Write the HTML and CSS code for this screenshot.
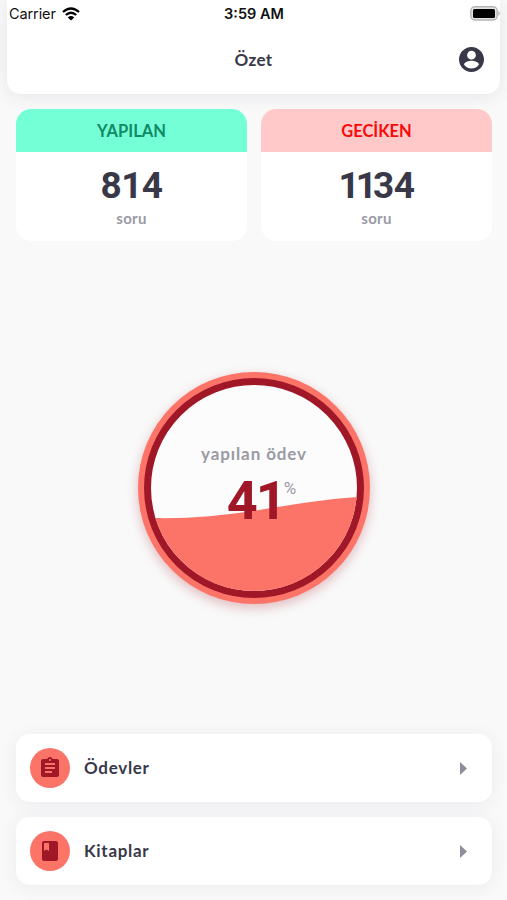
FILE: index.html
```html
<!DOCTYPE html>
<html lang="tr">
<head>
    <meta charset="UTF-8">
    <meta name="viewport" content="width=device-width, initial-scale=1.0">
    <title>Özet</title>
    <link rel="stylesheet" href="styles.css">
</head>
<body>
    <header class="header">
        <div class="status-bar">
            <div class="carrier">
                <span>Carrier</span>
                <svg class="wifi" viewBox="0 0 18 14">
                    <path d="M1 5Q9-2 17 5M3.8 8Q9 3.4 14.2 8" fill="none" stroke="#000" stroke-width="2.3"/>
                    <path d="M5.8 10.4Q9 7.7 12.2 10.4L9 13.6z"/>
                </svg>
            </div>
            <span class="time">3:59 AM</span>
            <svg class="battery" viewBox="0 0 30 15">
                <rect x="0.8" y="0.8" width="26.4" height="13.2" rx="4" fill="#e4e4e4" stroke="#b5b5b5" stroke-width="1.4"/>
                <rect x="3" y="3" width="22" height="9" rx="1.5"/>
                <path d="M28.3 4.8q3 2.600 0 5.200z" fill="#b5b5b5"/>
            </svg>
        </div>
        <div class="title-bar">
            <h1>Özet</h1>
            <svg class="account" viewBox="2 2 20 20">
                <path d="M12 2C6.48 2 2 6.48 2 12s4.48 10 10 10 10-4.480 10-10S17.52 2 12 2zm0 3c1.930 0 3.500 1.570 3.500 3.500S13.930 12 12 12s-3.500-1.570-3.500-3.500S10.070 5 12 5zm0 14.200c-2.500 0-4.710-1.280-6-3.220.03-1.990 4-3.080 6-3.080s5.970 1.090 6 3.080c-1.290 1.940-3.500 3.220-6 3.220z"/>
            </svg>
        </div>
    </header>

    <section class="stats">
        <div class="stat">
            <h2 class="done">YAPILAN</h2>
            <p class="count">814</p>
            <p class="unit">soru</p>
        </div>
        <div class="stat">
            <h2 class="late">GECİKEN</h2>
            <p class="count"><span class="tight">11</span>34</p>
            <p class="unit">soru</p>
        </div>
    </section>

    <main class="progress">
        <div class="ring">
            <div class="gauge">
                <svg class="wave" viewBox="0 0 206 206">
                    <path d="M0 133C35 134 70 131 108 125C145 119 175 114 206 112V206H0z"/>
                </svg>
                <div class="gauge-text">
                    <p class="label">yapılan ödev</p>
                    <p class="value">41<span>%</span></p>
                </div>
            </div>
        </div>
    </main>

    <nav class="menu">
        <a class="item">
            <span class="icon">
                <svg viewBox="0 0 24 24">
                    <path d="M19 3h-4.180C14.400 1.840 13.300 1 12 1s-2.400.84-2.820 2H5c-1.100 0-2 .9-2 2v14c0 1.100.9 2 2 2h14c1.100 0 2-.9 2-2V5c0-1.100-.9-2-2-2zm-7 0c.55 0 1 .45 1 1s-.45 1-1 1-1-.45-1-1 .45-1 1-1zm2 14H7v-2h7v2zm3-4H7v-2h10v2zm0-4H7V7h10v2z"/>
                </svg>
            </span>
            <span class="name">Ödevler</span>
            <svg class="arrow" viewBox="0 0 7 13"><path d="M0 0l7 6.500-7 6.500z"/></svg>
        </a>
        <a class="item">
            <span class="icon">
                <svg viewBox="0 0 24 24">
                    <path d="M18 2H6c-1.100 0-2 .9-2 2v16c0 1.100.9 2 2 2h12c1.100 0 2-.9 2-2V4c0-1.100-.9-2-2-2zM6 4h5v8l-2.500-1.500L6 12V4z"/>
                </svg>
            </span>
            <span class="name">Kitaplar</span>
            <svg class="arrow" viewBox="0 0 7 13"><path d="M0 0l7 6.500-7 6.500z"/></svg>
        </a>
    </nav>
</body>
</html>
```

FILE: styles.css
```css
* {
    margin: 0;
    padding: 0;
    box-sizing: border-box;
}
body {
    height: 900px;
    display: flex;
    flex-direction: column;
    background: #f9f9f9;
    color: #383849;
    font-family: 'Lato', sans-serif;
    overflow: hidden;
}
svg {
    display: block;
}
.header {
    height: 94px;
    margin: 0 7px;
    background: #fff;
    border-radius: 0 0 14px 14px;
    box-shadow: 0 2px 18px rgba(56, 56, 110, 0.1);
}
.status-bar {
    height: 27px;
    display: grid;
    grid-template-columns: 1fr auto 1fr;
    align-items: center;
    padding-left: 2px;
    color: #111;
    font-family: 'Inter', sans-serif;
    font-size: 14.5px;
}
.carrier {
    display: flex;
    align-items: center;
    gap: 6px;
    letter-spacing: -0.1px;
}
.wifi {
    width: 18px;
    height: 14px;
}
.time {
    margin-left: -1px;
    font-weight: 600;
}
.battery {
    width: 30px;
    height: 15px;
    justify-self: end;
}
.title-bar {
    height: 65px;
    display: grid;
    grid-template-columns: 1fr auto 1fr;
    align-items: center;
    padding: 0 16px;
}
.title-bar h1 {
    grid-column: 2;
    font-size: 17px;
    letter-spacing: 0.4px;
}
.account {
    width: 25px;
    height: 25px;
    justify-self: end;
    fill: #383849;
}
.stats {
    display: grid;
    grid-template-columns: 1fr 1fr;
    gap: 14px;
    padding: 15px 15px 0 16px;
}
.stat {
    height: 132px;
    background: #fff;
    border-radius: 15px;
    text-align: center;
    overflow: hidden;
}
.stat h2 {
    height: 43px;
    line-height: 44px;
    font-size: 16.5px;
}
.done {
    background: #75ffd7;
    color: #118a66;
}
.late {
    background: #ffc9c9;
    color: #f90a0a;
}
.count {
    margin-top: 11px;
    font-family: 'Roboto', sans-serif;
    font-size: 37px;
    line-height: 46px;
    font-weight: 700;
    letter-spacing: -0.5px;
}
.tight {
    letter-spacing: -4px;
}
.unit {
    margin-top: 1px;
    color: #9a9aa5;
    font-size: 15px;
    line-height: 17px;
    font-weight: 700;
    letter-spacing: 0.3px;
}
.progress {
    flex: 1;
    display: flex;
    align-items: center;
    justify-content: center;
    padding-left: 1px;
}
.ring {
    width: 232px;
    height: 232px;
    padding: 6px;
    border-radius: 50%;
    background: #fc7468;
    box-shadow: 0 4px 12px rgba(160, 24, 40, 0.28);
}
.gauge {
    height: 220px;
    display: grid;
    border: 7px solid #a01828;
    border-radius: 50%;
    background: #fcfcfc;
    overflow: hidden;
}
.wave,
.gauge-text {
    grid-area: 1 / 1;
}
.wave {
    width: 206px;
    height: 206px;
    fill: #fc7468;
}
.gauge-text {
    z-index: 1;
    padding-top: 57px;
    text-align: center;
}
.label {
    color: #9a9aa5;
    font-size: 17px;
    line-height: 24px;
    font-weight: 700;
    letter-spacing: 0.9px;
}
.value {
    display: flex;
    justify-content: center;
    padding-left: 15px;
    color: #a01828;
    font-family: 'Roboto', sans-serif;
    font-size: 54px;
    line-height: 70px;
    font-weight: 700;
    letter-spacing: -2px;
}
.value span {
    margin: 9px 0 0 -1px;
    color: #9a9aa5;
    font-size: 17px;
    line-height: 26px;
    font-weight: 400;
    letter-spacing: 0;
}
.menu {
    display: flex;
    flex-direction: column;
    gap: 15px;
    padding: 0 15px 15px 16px;
}
.item {
    height: 68px;
    display: flex;
    align-items: center;
    padding: 0 25px 0 14px;
    background: #fff;
    border-radius: 14px;
    box-shadow: 0 2px 18px rgba(56, 56, 110, 0.07);
}
.icon {
    width: 40px;
    height: 40px;
    display: flex;
    align-items: center;
    justify-content: center;
    border-radius: 50%;
    background: #fc7468;
}
.icon svg {
    width: 24px;
    height: 24px;
    fill: #a01828;
}
.name {
    flex: 1;
    margin-left: 14px;
    font-size: 17px;
    line-height: 22px;
    padding-bottom: 1px;
    font-weight: 700;
    letter-spacing: 0.7px;
}
.arrow {
    width: 7px;
    height: 13px;
    fill: #8e8e9a;
}
```
